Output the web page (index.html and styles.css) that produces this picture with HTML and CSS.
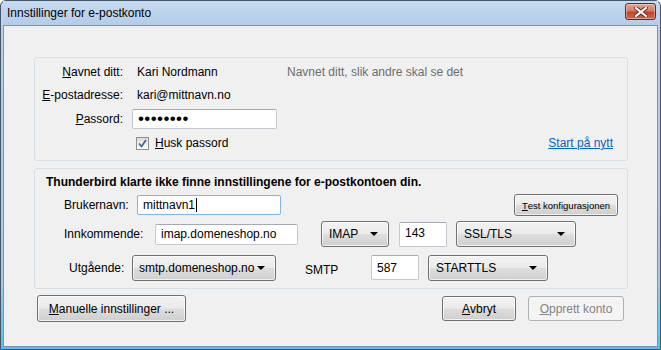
FILE: index.html
```html
<!DOCTYPE html>
<html lang="no">
<head>
    <meta charset="UTF-8">
    <title>Innstillinger for e-postkonto</title>
    <link rel="stylesheet" href="styles.css">
</head>
<body>
    <div class="window">
        <div class="titlebar">
            <span class="title">Innstillinger for e-postkonto</span>
            <div class="close-btn">
                <svg width="14" height="10" viewBox="0 0 14 10">
                    <path d="M2 1 L12 9 M12 1 L2 9" stroke="#6b2418" stroke-width="4" stroke-linecap="square"/>
                    <path d="M2 1 L12 9 M12 1 L2 9" stroke="#ffffff" stroke-width="2.2" stroke-linecap="square"/>
                </svg>
            </div>
        </div>

        <div class="client">
            <div class="group group-identity">
                <div class="row row-a">
                    <span class="label"><u>N</u>avnet ditt:</span>
                    <span class="value value-name">Kari Nordmann</span>
                    <span class="hint">Navnet ditt, slik andre skal se det</span>
                </div>
                <div class="row row-a">
                    <span class="label"><u>E</u>-postadresse:</span>
                    <span class="value">kari@mittnavn.no</span>
                </div>
                <div class="row row-b">
                    <span class="label"><u>P</u>assord:</span>
                    <div class="textbox pass-box"><span class="dots">&#8226;&#8226;&#8226;&#8226;&#8226;&#8226;&#8226;&#8226;</span></div>
                </div>
                <div class="row row-c">
                    <span class="label"></span>
                    <span class="checkbox">
                        <svg width="9" height="9" viewBox="0 0 9 9">
                            <path d="M1 4.5 L3.5 7.5 L8 1" fill="none" stroke="#3a5a8c" stroke-width="1.6"/>
                        </svg>
                    </span>
                    <span class="check-label"><u>H</u>usk passord</span>
                    <a class="link" href="#">Start på nytt</a>
                </div>
            </div>

            <div class="group group-config">
                <div class="heading">Thunderbird klarte ikke finne innstillingene for e-postkontoen din.</div>
                <div class="row row-user">
                    <span class="clabel lbl-user">Brukernavn:</span>
                    <div class="textbox box-user">mittnavn1<span class="caret"></span></div>
                    <div class="button btn-test"><u>T</u>est konfigurasjonen</div>
                </div>
                <div class="row row-in">
                    <span class="clabel lbl-in">Innkommende:</span>
                    <div class="textbox box-in">imap.domeneshop.no</div>
                    <div class="menulist menu-imap">IMAP<span class="arrow"></span></div>
                    <div class="textbox box-port">143</div>
                    <div class="menulist menu-ssl">SSL/TLS<span class="arrow"></span></div>
                </div>
                <div class="row row-out">
                    <span class="clabel lbl-out">Utgående:</span>
                    <div class="menulist menu-smtp">smtp.domeneshop.no<span class="arrow"></span></div>
                    <span class="smtp-text">SMTP</span>
                    <div class="textbox box-port box-port-out">587</div>
                    <div class="menulist menu-start">STARTTLS<span class="arrow"></span></div>
                </div>
            </div>

            <div class="actions">
                <div class="button btn-manual"><u>M</u>anuelle innstillinger ...</div>
                <div class="button btn-cancel"><u>A</u>vbryt</div>
                <div class="button btn-create disabled"><u>O</u>pprett konto</div>
            </div>
        </div>
    </div>
</body>
</html>
```

FILE: styles.css
```css
body {
    margin: 0;
    padding: 0;
    font-family: "Liberation Sans", Arial, sans-serif;
    font-size: 12px;
    color: #000;
    background: #ffffff;
}

.window {
    width: 661px;
    height: 350px;
    box-sizing: border-box;
    border: 1px solid #45556a;
    border-radius: 6px 6px 0 0;
    padding: 0 2px 2px 2px;
    display: flex;
    flex-direction: column;
    background: linear-gradient(#c2d7ee 0%, #b7cfe9 10%, #a9c8e6 80%, #4fc4ea 100%);
}

.titlebar {
    height: 24px;
    display: flex;
    align-items: center;
    padding-left: 4px;
    background: linear-gradient(#c6dbf0, #b3cce8);
}

.title {
    font-size: 12px;
    color: #000;
    flex: 1;
    padding-bottom: 1px;
}

.close-btn {
    width: 29px;
    height: 15px;
    margin-right: 2px;
    margin-top: -3px;
    border: 1px solid #5e2a22;
    border-radius: 3px;
    background: linear-gradient(#e6a595 0%, #d77b65 45%, #c2432b 55%, #cf6a4e 100%);
    box-shadow: inset 0 0 0 1px rgba(255, 255, 255, 0.35);
    display: flex;
    align-items: center;
    justify-content: center;
}

.client {
    flex: 1;
    background: #f0f0f0;
    border: 1px solid #7f92a8;
    display: flex;
    flex-direction: column;
}

.group {
    margin-left: 30px;
    width: 594px;
    box-sizing: border-box;
    border: 1px solid #d5dfe5;
    border-radius: 3px;
    display: flex;
    flex-direction: column;
}

.group-identity {
    margin-top: 31px;
    padding: 2px 14px 5px 0;
    height: 104px;
}

.group-config {
    margin-top: 7px;
    padding: 0 9px 0 0;
    height: 121px;
}

.row {
    display: flex;
    align-items: center;
}

.row-a {
    height: 23px;
}

.row-b {
    height: 25px;
}

.row-c {
    height: 24px;
}

.label {
    width: 88px;
    text-align: right;
    margin-right: 9px;
    flex-shrink: 0;
}

.value {
    padding-left: 5px;
}

.value-name {
    width: 150px;
}

.hint {
    color: #6d6d6d;
}

.textbox {
    height: 20px;
    box-sizing: border-box;
    background: #fff;
    border: 1px solid #c5c9cf;
    border-top-color: #a5aab2;
    border-radius: 2px;
    padding-left: 5px;
    display: flex;
    align-items: center;
    font-size: 12px;
    white-space: nowrap;
}

.pass-box {
    width: 145px;
}

.dots {
    font-size: 17px;
    letter-spacing: 0.4px;
    line-height: 10px;
    padding-top: 1px;
}

.checkbox {
    width: 11px;
    height: 11px;
    margin-left: 4px;
    border: 1px solid #8f8f8f;
    background: linear-gradient(#dcdcdc, #ffffff);
    display: flex;
    align-items: center;
    justify-content: center;
}

.check-label {
    margin-left: 6px;
}

.link {
    margin-left: auto;
    color: #0066cc;
    text-decoration: underline;
}

.heading {
    font-weight: bold;
    padding: 5px 0 0 11px;
    height: 20px;
    box-sizing: border-box;
    line-height: 16px;
}

.row-user {
    height: 32px;
}

.row-in {
    height: 26px;
}

.row-out {
    height: 25px;
    margin-top: 8px;
}

.clabel {
    flex-shrink: 0;
}

.lbl-user {
    margin-left: 29px;
    width: 73px;
}

.lbl-in {
    margin-left: 29px;
    width: 91px;
}

.lbl-out {
    margin-left: 34px;
    width: 63px;
}

.box-user {
    width: 144px;
    border-color: #7eb4ea;
}

.caret {
    display: inline-block;
    width: 1px;
    height: 14px;
    background: #000;
    margin-left: 1px;
}

.box-in {
    width: 143px;
    height: 21px;
}

.box-port {
    width: 48px;
    height: 25px;
    margin-left: 10px;
    padding-bottom: 3px;
}

.box-port-out {
    margin-left: 0;
    padding-bottom: 0;
}

.button, .menulist {
    box-sizing: border-box;
    border: 1px solid #707070;
    border-radius: 3px;
    background: linear-gradient(#f2f2f2 0%, #ebebeb 48%, #dddddd 52%, #cfcfcf 100%);
    box-shadow: inset 0 0 0 1px rgba(255, 255, 255, 0.7);
    display: flex;
    align-items: center;
    white-space: nowrap;
}

.button {
    justify-content: center;
}

.menulist {
    height: 26px;
    padding-left: 7px;
    position: relative;
}

.arrow {
    position: absolute;
    right: 10px;
    top: 10px;
    width: 0;
    height: 0;
    border-left: 4px solid transparent;
    border-right: 4px solid transparent;
    border-top: 4px solid #000;
}

.menu-imap {
    width: 68px;
    margin-left: 23px;
}

.menu-ssl {
    width: 120px;
    margin-left: 9px;
}

.menu-smtp {
    width: 144px;
    padding-left: 6px;
}

.smtp-text {
    width: 66px;
    margin-left: 29px;
    padding-top: 5px;
}

.menu-start {
    width: 120px;
    margin-left: 9px;
}

.btn-test {
    margin-left: auto;
    width: 104px;
    height: 22px;
    font-size: 9.5px;
}

.actions {
    display: flex;
    align-items: center;
    margin-top: 6px;
    padding: 0 33px;
}

.btn-manual {
    width: 149px;
    height: 27px;
    font-size: 12px;
}

.btn-cancel {
    margin-left: auto;
    width: 74px;
    height: 25px;
}

.btn-create {
    width: 96px;
    height: 25px;
    margin-left: 12px;
}

.disabled {
    background: #f4f4f4;
    border-color: #adb2b5;
    color: #838383;
    box-shadow: none;
}
```
